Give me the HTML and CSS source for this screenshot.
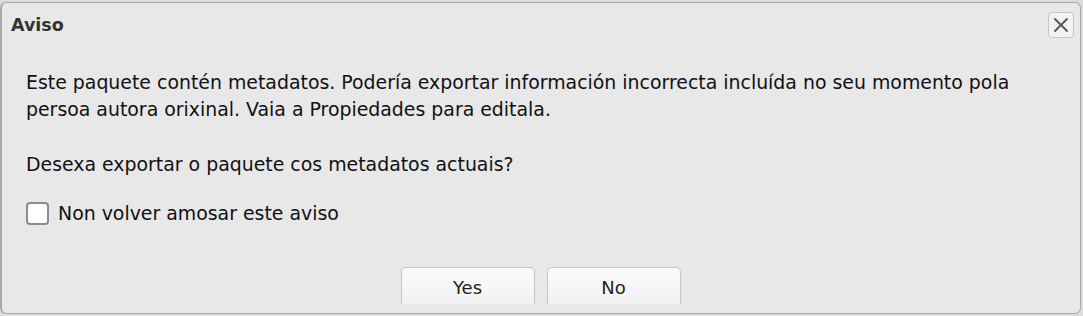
FILE: index.html
```html
<!DOCTYPE html>
<html>
<head>
<meta charset="utf-8">
<link rel="stylesheet" href="styles.css">
</head>
<body>
<div class="dialog">
  <div class="titlebar">
    <span class="title">Aviso</span>
    <button class="close" aria-label="Close">
      <svg width="18" height="18" viewBox="0 0 18 18"><path d="M3 3 L15 15 M15 3 L3 15" stroke="#555" stroke-width="1.8" stroke-linecap="round"/></svg>
    </button>
  </div>
  <div class="content">
    <p class="msg">Este paquete contén metadatos. Podería exportar información incorrecta incluída no seu momento pola persoa autora orixinal. Vaia a Propiedades para editala.</p>
    <p class="msg q">Desexa exportar o paquete cos metadatos actuais?</p>
    <label class="check"><span class="box"></span>Non volver amosar este aviso</label>
    <div class="buttons">
      <button class="btn">Yes</button>
      <button class="btn">No</button>
    </div>
  </div>
</div>
</body>
</html>
```
FILE: styles.css
```css
html, body {
  margin: 0;
  padding: 0;
}
body {
  background: #dcdcdc;
  padding-top: 2px;
  font-family: "DejaVu Sans", Verdana, sans-serif;
  width: 1083px;
  height: 316px;
  overflow: hidden;
}
.dialog {
  box-sizing: border-box;
  width: 1081px;
  height: 312px;
  background: #e8e8e8;
  border: 1px solid #a9a9a9;
  border-left: 2px solid #a9a9a9;
  border-radius: 6px;
  overflow: hidden;
  display: flex;
  flex-direction: column;
}
.titlebar {
  flex-shrink: 0;
  display: flex;
  align-items: center;
  justify-content: space-between;
  height: 44px;
  padding: 0 6px 0 9px;
}
.title {
  font-weight: bold;
  font-size: 17.5px;
  color: #333;
}
.close {
  width: 26px;
  height: 26px;
  padding: 0;
  border: 1px solid #c4c4c4;
  border-radius: 4px;
  background: #f2f2f2;
  display: flex;
  align-items: center;
  justify-content: center;
}
.content {
  flex-shrink: 0;
  box-sizing: border-box;
  padding: 22px 30px 0 24px;
  height: 257px;
  overflow: hidden;
  color: #111;
  font-size: 18.9px;
}
.msg {
  margin: 0;
  line-height: 27px;
}
.q {
  margin-top: 28px;
}
.check {
  display: flex;
  align-items: center;
  gap: 9px;
  margin-top: 22px;
  line-height: 27px;
}
.box {
  box-sizing: border-box;
  width: 23px;
  height: 23px;
  border: 2px solid #8c8a98;
  border-radius: 4px;
  background: #fff;
}
.buttons {
  display: flex;
  justify-content: center;
  gap: 12px;
  margin-top: 40px;
  padding-left: 5px;
}
.btn {
  flex-shrink: 0;
  width: 134px;
  height: 48px;
  border: 1px solid #c6c6c6;
  border-radius: 5px;
  background: linear-gradient(#fbfbfb, #efefef);
  font-family: "DejaVu Sans", Verdana, sans-serif;
  font-size: 18px;
  color: #222;
  padding: 0 0 8px 0;
}
```
